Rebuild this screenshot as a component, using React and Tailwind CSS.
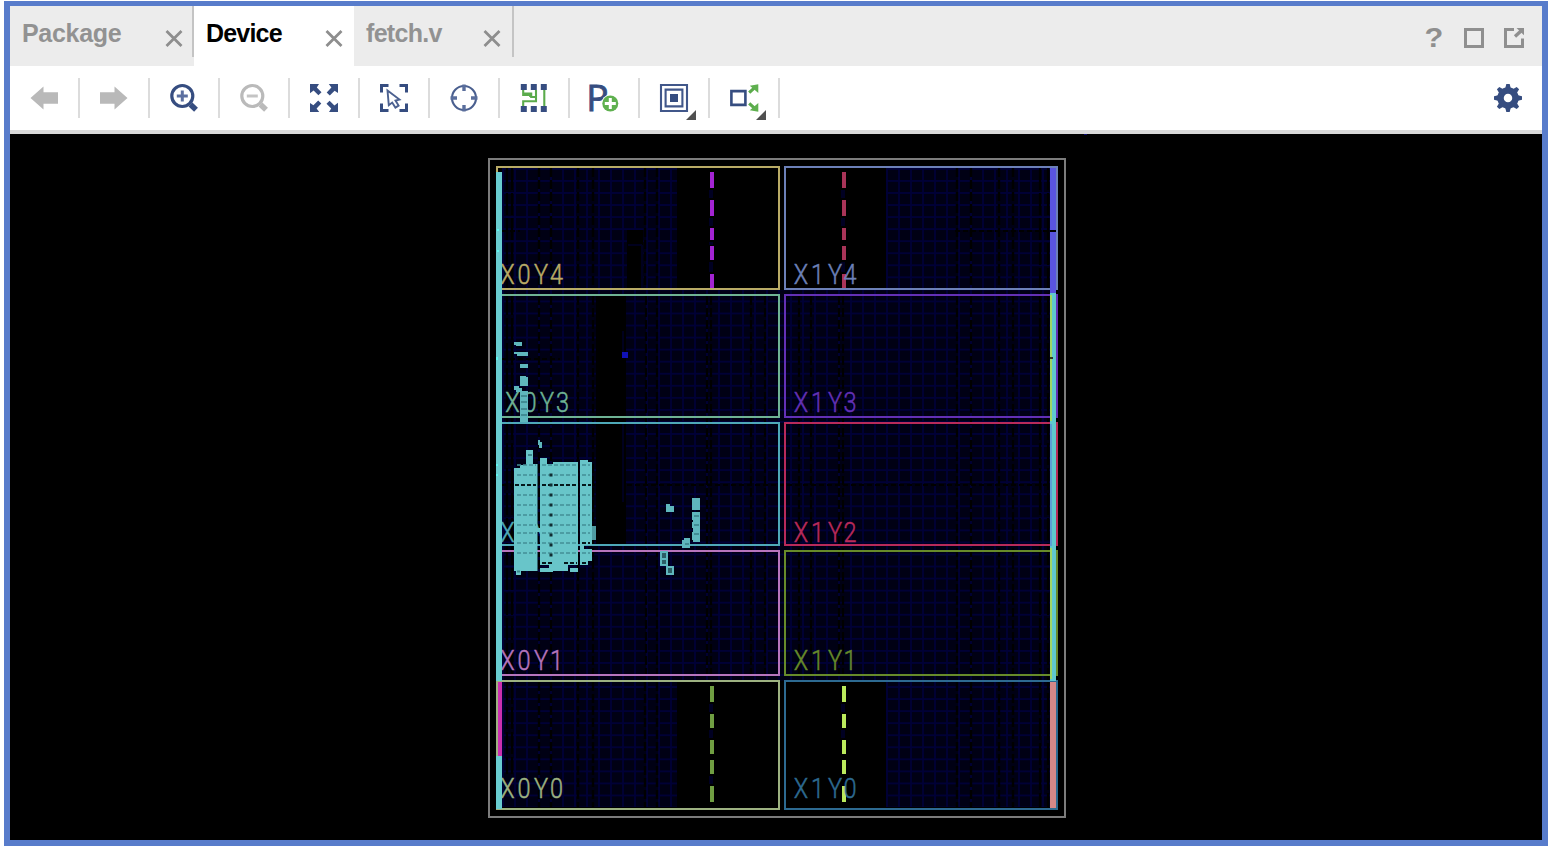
import React from "react";

const NAVY = "#364d80";
const GREEN = "#5bab4b";
const CYAN = "#68c5c9";

function Close() {
  return (
    <svg className="block h-[18px] w-[18px]" viewBox="0 0 18 18" stroke="#8e8e8e" strokeWidth="2.8">
      <path d="M1.5 1L16.5 16M16.5 1L1.5 16" />
    </svg>
  );
}

function Icon({ children }) {
  return (
    <svg className="block h-7 w-7 overflow-visible" viewBox="0 0 28 28" fill="none">
      {children}
    </svg>
  );
}

function Tool({ children }) {
  return (
    <div className="flex h-10 w-[70px] items-center border-r-2 border-[#dcdcdc] pl-5">
      <Icon>{children}</Icon>
    </div>
  );
}

function Lens({ color, soft, plus }) {
  return (
    <>
      <circle cx="12.3" cy="12" r="10.5" stroke={color} strokeWidth="3.2" />
      <path d="M20.5 20.5L26 25.7" stroke={color} strokeWidth="5.6" />
      <path d={plus ? "M6.8 12H17.8M12.3 6.5V17.5" : "M6.8 12H17.8"} stroke={soft} strokeWidth="3" />
    </>
  );
}

function Corner({ turn }) {
  return (
    <g transform={`rotate(${turn} 14 14)`}>
      <path d="M0 0H9L6.8 3.4L11.5 8.2L8.4 11.3L3.6 6.6L0 9.2Z" fill={NAVY} />
    </g>
  );
}

function Tools() {
  return (
    <div className="flex">
      <Tool>
        <path d="M.5 14L13.5 2.6V8.2H28V19.8H13.5V25.4Z" fill="#b9b9b9" />
      </Tool>
      <Tool>
        <path d="M27.5 14L14.5 2.6V8.2H0V19.8H14.5V25.4Z" fill="#b9b9b9" />
      </Tool>
      <Tool>
        <Lens color={NAVY} soft="#5c70a0" plus />
      </Tool>
      <Tool>
        <Lens color="#bababa" soft="#c4c4c4" />
      </Tool>
      <Tool>
        <Corner turn={0} />
        <Corner turn={90} />
        <Corner turn={180} />
        <Corner turn={270} />
      </Tool>
      <Tool>
        <path d="M1.5 8.5V1.5H8.5M19.5 1.5H26.5V8.5M26.5 19.5V26.5H19.5M8.5 26.5H1.5V19.5" stroke={NAVY} strokeWidth="3" />
        <path d="M7.5 6.5L19.5 15.5L15.5 16.6L18.6 21.6L15.4 23.6L12.2 18.6L8.8 21.2Z" fill="#fff" stroke="#4c6190" strokeWidth="1.9" />
      </Tool>
      <Tool>
        <circle cx="14" cy="14" r="12" stroke="#4a5f8f" strokeWidth="2.1" />
        <path d="M14 .5V7M14 21V27.500M.5 14H7M21 14H27.500" stroke="#5a6e9c" strokeWidth="3.4" />
      </Tool>
      <Tool>
        <path d="M3.2 6V11H10.2V13M16 6V17.3H3.2V22M3.2 9.5H11.2V13H15M24.3 6V22" stroke={GREEN} strokeWidth="2.1" />
        <path d="M.8 0h6v6h-6zM10.8 0h6v6h-6zM20.8 0h6v6h-6zM.8 22h6v6h-6zM10.8 22h6v6h-6zM20.8 22h6v6h-6z" fill={NAVY} />
      </Tool>
      <Tool>
        <text x="-3.7" y="27.3" fill={NAVY} stroke={NAVY} strokeWidth=".9" className="font-['Open_Sans',sans-serif] text-[37px]">P</text>
        <circle cx="20.3" cy="19.5" r="9" fill="#fff" />
        <circle cx="20.3" cy="19.5" r="8" fill="#5fb04f" />
        <path d="M14.8 19.5H25.8M20.3 14V25" stroke="#fff" strokeWidth="3" />
      </Tool>
      <Tool>
        <path d="M1 1H27V27H1ZM5.6 5.6H22.4V22.4H5.6Z" stroke="#41578a" strokeWidth="2.1" />
        <path d="M10 10h8v8h-8z" fill={NAVY} />
        <path d="M36 26V36H26Z" fill="#505050" />
      </Tool>
      <Tool>
        <path d="M1.4 7.1H15.4V20.9H1.4Z" stroke={NAVY} strokeWidth="2.6" />
        <path d="M19.2 8.6L25 3.4M19.2 19.4L25 24.6" stroke={GREEN} strokeWidth="3.2" />
        <path d="M28.3 .2V9L19.8 1.8ZM28.3 27.8V19L19.8 26.2Z" fill="#5fb04f" />
        <path d="M36 26V36H26Z" fill="#505050" />
      </Tool>
    </div>
  );
}

const REGIONS = [
  { y: 167, h: 122, left: "#b9ab66", right: "#6c80b8", l: "X0Y4", r: "X1Y4", base: 284 },
  { y: 295, h: 122, left: "#6eb394", right: "#6330b5", l: "X0Y3", r: "X1Y3", base: 412 },
  { y: 423, h: 122, left: "#4ea9b8", right: "#b92a5a", l: "X0Y2", r: "X1Y2", base: 542 },
  { y: 551, h: 124, left: "#b675bd", right: "#678a2a", l: "X0Y1", r: "X1Y1", base: 670 },
  { y: 681, h: 128, left: "#9db281", right: "#2d6a91", l: "X0Y0", r: "X1Y0", base: 798 },
];

const TOP_BARS = [[172, 16], [200, 16], [228, 12], [246, 14], [274, 14]];
const BOTTOM_BARS = [[686, 16], [714, 14], [740, 14], [760, 14], [786, 16]];

const SMALL_CELLS = [
  [514, 342, 8, 3], [516, 343, 6, 3], [514, 352, 14, 2], [517, 353, 11, 3], [520, 364, 8, 4], [520, 377, 8, 9],
  [520, 376, 6, 3], [514, 386, 5, 4], [516, 388, 6, 4], [520, 391, 8, 31], [538, 440, 2, 5], [539, 442, 3, 6],
  [666, 504, 4, 8], [668, 506, 6, 6], [692, 498, 8, 12], [692, 512, 8, 8], [693, 520, 7, 22], [692, 522, 4, 6],
  [692, 532, 5, 8], [682, 540, 8, 8], [684, 538, 6, 4],
];

const SEAMS = [465, 475, 495, 505, 515, 525, 533, 543, 553];

function Bars({ x, rows, color }) {
  return rows.map(([y, h]) => <rect key={y} x={x} y={y} width="4" height={h} fill={color} />);
}

// Region names use condensed glyphs, each centred on its own column.
const SQUEEZE = 0.84;

function RegionName({ name, centers, base, color }) {
  return (
    <text
      transform={`scale(${SQUEEZE} 1)`}
      x={centers.map((c) => (c / SQUEEZE).toFixed(2)).join(" ")}
      y={base}
      fill={color}
      stroke={color}
      strokeWidth=".5"
      textAnchor="middle"
      className="font-[Roboto,sans-serif] text-[28px] font-light"
    >
      {name}
    </text>
  );
}

function Floorplan() {
  return (
    <svg className="block h-[706px] w-[1532px]" viewBox="10 134 1532 706" fill="none">
      <defs>
        <pattern id="tiles" x="514" y="180" width="12" height="12.05" patternUnits="userSpaceOnUse">
          <path d="M0 0h12v12.05h-12z" fill="#000014" />
          <path d="M1 0V12.05M0 1H12" stroke="#000036" strokeWidth="1.8" />
        </pattern>
      </defs>

      <path d="M1084 134h3v1h-3z" fill="#0a0a70" />
      <path d="M489 159H1065V817H489Z" stroke="#7c7c7c" strokeWidth="2" />

      <path d="M502 168H677V289H502ZM886 168H1050V289H886ZM502 290H1056V681H502ZM502 682H677V807H502ZM886 682H1050V807H886Z" fill="url(#tiles)" />
      <path d="M596 296H626V545H596ZM627 230H643V289H627Z" fill="#000" />
      <path d="M623 331V352M623 424V502M642 245V288M628 245H642" stroke="#00001e" strokeWidth="2" />
      <path d="M539 168V289M551 168V289M578 168V289M593 168V289M645 168V289M657 168V289M957 168V289M971 168V289M999 168V289M1013 168V289M539 682V807M551 682V807M578 682V807M593 682V807M645 682V807M657 682V807M957 682V807M971 682V807M999 682V807M1013 682V807" stroke="#000" strokeWidth="2.4" strokeDasharray="9 3" />
      <path d="M539 296V675M551 296V675M578 296V675M593 296V675M646 296V675M657 296V675M707 296V675M711 296V675M751 296V675M765 296V675M799 296V675M811 296V675M839 296V675M843 296V675M957 296V675M971 296V675M999 296V675M1013 296V675" stroke="#000" strokeWidth="2.2" strokeDasharray="9 3" />
      <path d="M507 168V675M512 168V675M1040 168V807M1048 168V807M507 682V774M512 682V774" stroke="#000" strokeWidth="2.2" strokeDasharray="22 3" />
      <path d="M502 231H520M502 359H560M627 485H1050M502 485H596M955 231H1050" stroke="#000" strokeWidth="2" strokeDasharray="5 3" />
      <path d="M711 190V198M711 218V226M711 242V245M711 262V272M843 190V198M843 218V226M843 262V272M711 704V712M711 730V738M711 776V784M843 704V712M843 730V738" stroke="#000022" strokeWidth="4" />

      {REGIONS.map((r) => (
        <g key={r.l}>
          <rect x="497" y={r.y} width="282" height={r.h} stroke={r.left} strokeWidth="2" />
          <rect x="785" y={r.y} width="272" height={r.h} stroke={r.right} strokeWidth="2" />
          <RegionName name={r.l} centers={r.l === "X0Y3" ? [512.5, 530, 547, 562.5] : [507.5, 524, 541, 556.5]} base={r.base} color={r.left} />
        </g>
      ))}

      <Bars x={710} rows={TOP_BARS} color="#a324d2" />
      <Bars x={842} rows={TOP_BARS} color="#a93458" />
      <Bars x={710} rows={BOTTOM_BARS} color="#709e42" />
      <Bars x={842} rows={BOTTOM_BARS} color="#bbea5c" />

      {REGIONS.map((r) => (
        <RegionName key={r.r} name={r.r} centers={[801, 817.5, 835, 850]} base={r.base} color={r.right} />
      ))}

      <path d="M496 172H502V681H496ZM496 756H502V809H496Z" fill="#69cdd0" />
      <path d="M498 682H502V756H498Z" fill="#cb2fae" />
      <path d="M497 229h2v2h-2zM497 250h2v2h-2zM496 357h2v3h-2zM496 464h2v2h-2zM496 474h2v2h-2z" fill="#5ff5ee" />
      <path d="M1050 168H1056V294H1050Z" fill="#5954df" />
      <path d="M1050 231H1056" stroke="#000" strokeWidth="2" />
      <path d="M1050 293H1056V681H1050Z" fill="#5fc8ce" />
      <path d="M1051 295V421M1051 548V679" stroke="#9ed768" strokeWidth="2" />
      <path d="M1051 424V546" stroke="#5b9fd6" strokeWidth="2" />
      <path d="M1050 358H1053" stroke="#333a20" strokeWidth="2" />
      <path d="M1050 682H1056V808H1050Z" fill="#d58888" />

      {SMALL_CELLS.map(([x, y, w, h]) => (
        <rect key={`${x}-${y}`} x={x} y={y} width={w} height={h} fill="#5fb7bd" />
      ))}
      <path d="M521 396H527M521 402H527M521 409H527M521 415H527M694 516H699M694 525H699M694 534H699M685 544H689" stroke="#397f87" strokeWidth="1.5" />
      <path d="M661 552H667V559H661ZM661 559H667V565H661ZM667 567H673V574H667Z" fill="#2c5f66" stroke="#5fb7bd" strokeWidth="2" />

      <path d="M514 468H520V465H526V450H533V464H537.5V571H521V575H516V571H514Z" fill={CYAN} />
      <path d="M540 458H547V464H553V462H578V565H568V571H549V565H540ZM540 568H553V572H540ZM570 568H578V572H570Z" fill={CYAN} />
      <path d="M580 460H588V462H592V545H584V549H592V561H588V565H580Z" fill={CYAN} />
      <path d="M592 526H596V540H592Z" fill="#4f9ba2" />
      <path d="M537 528H541V532H537Z" fill={CYAN} />
      {SEAMS.map((y) => (
        <path key={y} d={`M517 ${y}H536M542 ${y}H576M582 ${y}H590`} stroke="#438f96" strokeWidth="1.6" strokeDasharray="4 2" />
      ))}
      <path d="M515 485H536M542 485H576M582 485H591M542 563H553M564 563H577M582 563H588M582 543H590" stroke="#06181c" strokeWidth="2.2" strokeDasharray="4 2" />
      <path d="M551 473.500V560" stroke="#102d32" strokeWidth="3" strokeDasharray="3 7" />
      <path d="M528 455H532M517 571.500H520" stroke="#3d878e" strokeWidth="2" />

      <path d="M622 352h6v6h-6z" fill="#1011b5" />
    </svg>
  );
}

export default function App() {
  return (
    <div className="h-[852px] w-[1550px] overflow-hidden bg-white pl-1 pt-px">
      <div className="flex h-[845px] w-[1544px] flex-col border-6 border-t-5 border-[#587ccb] bg-white">
        <header className="flex h-[60px] shrink-0 justify-between bg-[#ececec] font-['Liberation_Sans',Arial,sans-serif] text-[25px] leading-[54px] font-bold text-[#929292]">
          <div className="flex">
            <div className="flex h-[51px] w-[184px] justify-between border-r-2 border-[#c4c4c4] pl-3 pr-[9px]">
              <span className="tracking-[-0.3px]">Package</span>
              <div className="pt-6"><Close /></div>
            </div>
            <div className="flex h-[60px] w-[160px] justify-between bg-white pl-3 pr-[11px]">
              <span className="tracking-[-0.8px] text-black">Device</span>
              <div className="pt-6"><Close /></div>
            </div>
            <div className="flex h-[51px] w-[160px] justify-between border-r-2 border-[#c4c4c4] pl-3 pr-[11px]">
              <span className="tracking-[-0.7px]">fetch.v</span>
              <div className="pt-6"><Close /></div>
            </div>
          </div>
          <div className="flex gap-5 pr-[18px] pt-[22px]">
            <div className="h-5 w-5 scale-x-110 text-center text-[28px] leading-[20px] text-[#8f8f8f]">?</div>
            <svg className="block h-5 w-5" viewBox="0 0 20 20" fill="none" stroke="#8f8f8f" strokeWidth="3">
              <path d="M1.500 1.500H18.500V18.500H1.500Z" />
            </svg>
            <svg className="block h-5 w-5" viewBox="0 0 20 20" fill="none" stroke="#8f8f8f" strokeWidth="3">
              <path d="M10 1.500H1.500V18.500H18.500V10.500" />
              <path d="M11 8.500L17 3" strokeWidth="3.400" />
              <path d="M12.500 0H20.300V7.500Z" fill="#8f8f8f" stroke="none" />
            </svg>
          </div>
        </header>

        <div className="flex h-[68px] shrink-0 items-center justify-between border-b-4 border-[#d9d9d9] bg-white pr-5">
          <Tools />
          <Icon>
            {[0, 45, 90, 135].map((a) => (
              <path key={a} d="M12.300 0H15.700L17.200 6H10.800ZM12.300 28H15.700L17.200 22H10.800Z" fill={NAVY} transform={`rotate(${a} 14 14)`} />
            ))}
            <circle cx="14" cy="14" r="7.500" stroke={NAVY} strokeWidth="6.500" />
          </Icon>
        </div>

        <main className="min-h-0 flex-1 bg-black">
          <Floorplan />
        </main>
      </div>
    </div>
  );
}
